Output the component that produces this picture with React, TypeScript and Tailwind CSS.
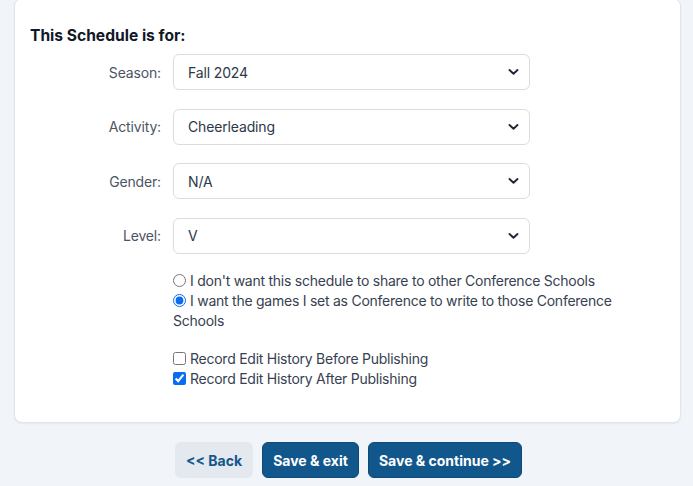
import React from "react";

function Chevron() {
  return (
    <svg className="pointer-events-none absolute right-[11px] top-1/2 -translate-y-1/2" width="11" height="7" viewBox="0 0 11 7" fill="none">
      <path d="M1.5 1.5 L5.5 5.2 L9.5 1.5" stroke="#1f2937" strokeWidth="1.9" strokeLinecap="round" strokeLinejoin="round" />
    </svg>
  );
}

function Row({ label, value }: { label: string; value: string }) {
  return (
    <div className="flex items-center">
      <div className="w-[131px] text-right text-[14px] tracking-[-0.15px] text-[#4b5563]">{label}</div>
      <div className="relative ml-[12px] w-[357px]">
        <select
          defaultValue={value}
          className="h-[36px] w-full appearance-none rounded-[6px] border border-[#d9dde3] bg-white pl-[14px] pr-8 text-[14px] tracking-[-0.15px] text-[#2d3748] outline-none"
        >
          <option value={value}>{value}</option>
        </select>
        <Chevron />
      </div>
    </div>
  );
}

export default function App() {
  return (
    <div className="min-h-[486px] bg-[#f1f4f8] pb-[8px] pl-[14px] pr-[12px] font-['Inter','Liberation_Sans',sans-serif]">
      <div className="-mt-[2px] rounded-[8px] border border-[#e1e5ea] bg-white pb-[33px] pl-[15px] pr-[15px] pt-[27px] shadow-[0_1px_2px_rgba(0,0,0,0.06)]">
        <h2 className="text-[15.6px] font-bold leading-[20px] text-[#111827]">This Schedule is for:</h2>
        <div className="mt-[8px] flex flex-col gap-[18.6px]">
          <Row label="Season:" value="Fall 2024" />
          <Row label="Activity:" value="Cheerleading" />
          <Row label="Gender:" value="N/A" />
          <Row label="Level:" value="V" />
        </div>
        <div className="ml-[143px] mt-[17.5px] w-[470px] text-[14px] leading-[20px] tracking-[-0.25px] text-[#374151]">
          <label className="block">
            <input type="radio" name="share" className="m-0 mr-[4px] h-[13px] w-[13px] align-[-1px] accent-[#0a6cf0]" />
            I don't want this schedule to share to other Conference Schools
          </label>
          <label className="block">
            <input type="radio" name="share" defaultChecked className="m-0 mr-[4px] h-[13px] w-[13px] align-[-1px] accent-[#0a6cf0]" />
            I want the games I set as Conference to write to those Conference Schools
          </label>
          <div className="mt-[18px]">
            <label className="block">
              <input type="checkbox" className="m-0 mr-[4px] h-[13px] w-[13px] align-[-1px] accent-[#0a6cf0]" />
              Record Edit History Before Publishing
            </label>
            <label className="block">
              <input type="checkbox" defaultChecked className="m-0 mr-[4px] h-[13px] w-[13px] align-[-1px] accent-[#0a6cf0]" />
              Record Edit History After Publishing
            </label>
          </div>
        </div>
      </div>
      <div className="mt-[19px] flex justify-center gap-[9px] pl-[2px] text-[14px] font-bold">
        <button className="h-[36px] w-[78px] rounded-[6px] bg-[#e4e9f0] text-[#14578b]">&lt;&lt; Back</button>
        <button className="h-[36px] w-[97px] rounded-[6px] border border-[#0e4a78] bg-[#12578c] text-white">Save &amp; exit</button>
        <button className="h-[36px] w-[154px] rounded-[6px] border border-[#0e4a78] bg-[#12578c] text-white">Save &amp; continue &gt;&gt;</button>
      </div>
    </div>
  );
}
